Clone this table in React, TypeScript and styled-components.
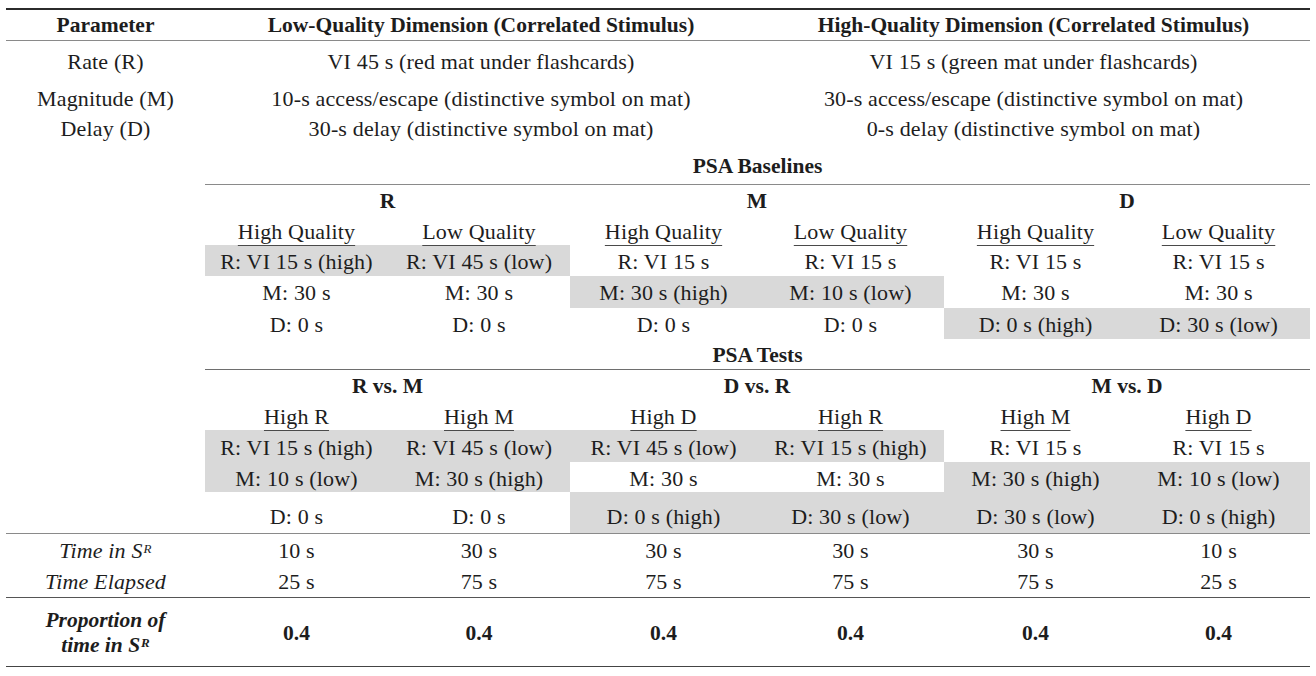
import styled, { createGlobalStyle } from "styled-components";

const GlobalStyle = createGlobalStyle`
  body {
    margin: 0;
    background: #ffffff;
  }
`;

const Page = styled.div`
  padding: 8px 6px;
`;

const Table = styled.table`
  width: 1304px;
  table-layout: fixed;
  border-collapse: collapse;
  border-top: 2px solid #2b2b2b;
  font-family: "Liberation Serif", Tinos, "DejaVu Serif", serif;
  font-size: 22px;
  letter-spacing: 0.15px;
  line-height: 1.1;
  color: #1d1d1d;
`;

const Row = styled.tr<{ $h: number; $rule?: string }>`
  height: ${(p) => p.$h}px;
  ${(p) => p.$rule && `border-bottom: 1px solid ${p.$rule};`}
`;

const Cell = styled.td<{
  $shade?: boolean;
  $bold?: boolean;
  $italic?: boolean;
  $rule?: string;
  $pt?: number;
}>`
  padding: ${(p) => p.$pt ?? 4}px 0 0;
  text-align: center;
  vertical-align: middle;
  white-space: nowrap;
  font-weight: ${(p) => (p.$bold ? 700 : 400)};
  font-size: ${(p) => (p.$bold ? "21.5px" : "22px")};
  letter-spacing: ${(p) => (p.$bold ? "0" : "0.15px")};
  font-style: ${(p) => (p.$italic ? "italic" : "normal")};
  background: ${(p) => (p.$shade ? "#d9d9d9" : "transparent")};
  ${(p) => p.$rule && `border-bottom: 1px solid ${p.$rule};`}
`;

const HeadCell = styled.th`
  padding: 2px 0 0;
  text-align: center;
  vertical-align: middle;
  white-space: nowrap;
  font-size: 21.5px;
  letter-spacing: 0;
  font-weight: 700;
`;

const Underlined = styled.span`
  text-decoration: underline;
  text-decoration-color: #4a4a4a;
  text-decoration-thickness: 1px;
  text-underline-offset: 6px;
`;

const Sup = styled.span`
  font-size: 13px;
  line-height: 0;
  vertical-align: 5px;
  margin-left: 1px;
`;

const TwoLine = styled.div`
  line-height: 25px;
  white-space: normal;
`;

const widths = [199, 183, 182, 187, 187, 183, 183];

const baselineRows = [
  ["R: VI 15 s (high)", "R: VI 45 s (low)", "R: VI 15 s", "R: VI 15 s", "R: VI 15 s", "R: VI 15 s"],
  ["M: 30 s", "M: 30 s", "M: 30 s (high)", "M: 10 s (low)", "M: 30 s", "M: 30 s"],
  ["D: 0 s", "D: 0 s", "D: 0 s", "D: 0 s", "D: 0 s (high)", "D: 30 s (low)"],
];
const baselineShade = [
  [1, 1, 0, 0, 0, 0],
  [0, 0, 1, 1, 0, 0],
  [0, 0, 0, 0, 1, 1],
];
const baselineHeights = [31, 32, 31];
const baselinePad = [4, 3, 3];

const testRows = [
  ["R: VI 15 s (high)", "R: VI 45 s (low)", "R: VI 45 s (low)", "R: VI 15 s (high)", "R: VI 15 s", "R: VI 15 s"],
  ["M: 10 s (low)", "M: 30 s (high)", "M: 30 s", "M: 30 s", "M: 30 s (high)", "M: 10 s (low)"],
  ["D: 0 s", "D: 0 s", "D: 0 s (high)", "D: 30 s (low)", "D: 30 s (low)", "D: 0 s (high)"],
];
const testShade = [
  [1, 1, 1, 1, 0, 0],
  [1, 1, 0, 0, 1, 1],
  [0, 0, 1, 1, 1, 1],
];
const testHeights = [32, 30, 41];
const testPad = [4, 4, 9];

const timeIn = ["10 s", "30 s", "30 s", "30 s", "30 s", "10 s"];
const elapsed = ["25 s", "75 s", "75 s", "75 s", "75 s", "25 s"];

const SR = () => (
  <>
    S<Sup>R</Sup>
  </>
);

export default function App() {
  return (
    <Page>
      <GlobalStyle />
      <Table>
        <colgroup>
          {widths.map((w, i) => (
            <col key={i} style={{ width: w }} />
          ))}
        </colgroup>
        <tbody>
          <Row $h={31} $rule="#8a8a8a">
            <HeadCell>Parameter</HeadCell>
            <HeadCell colSpan={3}>Low-Quality Dimension (Correlated Stimulus)</HeadCell>
            <HeadCell colSpan={3}>High-Quality Dimension (Correlated Stimulus)</HeadCell>
          </Row>
          <Row $h={43}>
            <Cell $pt={1}>Rate (R)</Cell>
            <Cell $pt={1} colSpan={3}>VI 45 s (red mat under flashcards)</Cell>
            <Cell $pt={1} colSpan={3}>VI 15 s (green mat under flashcards)</Cell>
          </Row>
          <Row $h={30}>
            <Cell $pt={2}>Magnitude (M)</Cell>
            <Cell $pt={2} colSpan={3}>10-s access/escape (distinctive symbol on mat)</Cell>
            <Cell $pt={2} colSpan={3}>30-s access/escape (distinctive symbol on mat)</Cell>
          </Row>
          <Row $h={30}>
            <Cell $pt={2}>Delay (D)</Cell>
            <Cell $pt={2} colSpan={3}>30-s delay (distinctive symbol on mat)</Cell>
            <Cell $pt={2} colSpan={3}>0-s delay (distinctive symbol on mat)</Cell>
          </Row>

          <Row $h={41}>
            <Cell />
            <Cell colSpan={6} $bold $pt={7} $rule="#8a8a8a">
              PSA Baselines
            </Cell>
          </Row>
          <Row $h={31}>
            <Cell />
            <Cell colSpan={2} $bold>R</Cell>
            <Cell colSpan={2} $bold>M</Cell>
            <Cell colSpan={2} $bold>D</Cell>
          </Row>
          <Row $h={30}>
            <Cell />
            {["High Quality", "Low Quality", "High Quality", "Low Quality", "High Quality", "Low Quality"].map(
              (t, i) => (
                <Cell key={i}>
                  <Underlined>{t}</Underlined>
                </Cell>
              )
            )}
          </Row>
          {baselineRows.map((r, ri) => (
            <Row key={ri} $h={baselineHeights[ri]}>
              <Cell />
              {r.map((t, ci) => (
                <Cell key={ci} $pt={baselinePad[ri]} $shade={!!baselineShade[ri][ci]}>
                  {t}
                </Cell>
              ))}
            </Row>
          ))}

          <Row $h={30}>
            <Cell />
            <Cell colSpan={6} $bold $rule="#6e6e6e">
              PSA Tests
            </Cell>
          </Row>
          <Row $h={32}>
            <Cell />
            <Cell colSpan={2} $bold>R vs. M</Cell>
            <Cell colSpan={2} $bold>D vs. R</Cell>
            <Cell colSpan={2} $bold>M vs. D</Cell>
          </Row>
          <Row $h={29}>
            <Cell />
            {["High R", "High M", "High D", "High R", "High M", "High D"].map((t, i) => (
              <Cell key={i}>
                <Underlined>{t}</Underlined>
              </Cell>
            ))}
          </Row>
          {testRows.map((r, ri) => (
            <Row key={ri} $h={testHeights[ri]} $rule={ri === 2 ? "#8a8a8a" : undefined}>
              <Cell />
              {r.map((t, ci) => (
                <Cell key={ci} $pt={testPad[ri]} $shade={!!testShade[ri][ci]}>
                  {t}
                </Cell>
              ))}
            </Row>
          ))}

          <Row $h={32}>
            <Cell $italic>
              Time in <SR />
            </Cell>
            {timeIn.map((t, i) => (
              <Cell key={i}>{t}</Cell>
            ))}
          </Row>
          <Row $h={32} $rule="#555555">
            <Cell $italic $pt={2}>Time Elapsed</Cell>
            {elapsed.map((t, i) => (
              <Cell key={i} $pt={2}>
                {t}
              </Cell>
            ))}
          </Row>
          <Row $h={69} $rule="#444444">
            <Cell $italic $bold $pt={2}>
              <TwoLine>
                Proportion of
                <br />
                time in <SR />
              </TwoLine>
            </Cell>
            {timeIn.map((_, i) => (
              <Cell key={i} $bold>
                0.4
              </Cell>
            ))}
          </Row>
        </tbody>
      </Table>
    </Page>
  );
}
